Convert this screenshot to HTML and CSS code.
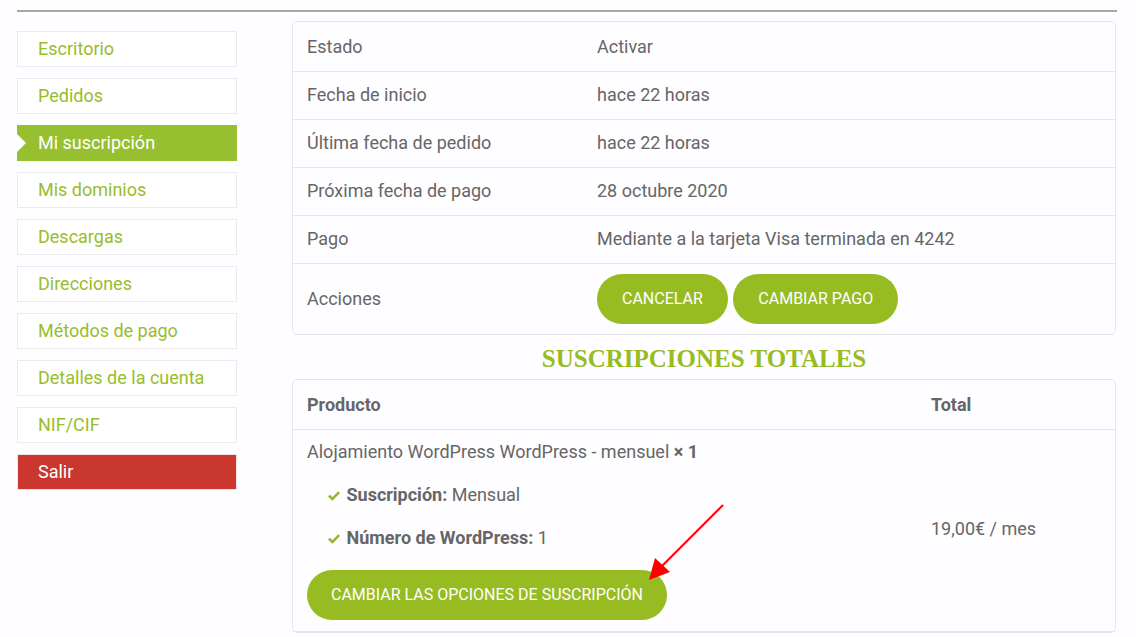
FILE: index.html
```html
<!DOCTYPE html>
<html lang="es">

<head>
    <meta charset="UTF-8">
    <title>Mi suscripción</title>
    <link rel="stylesheet" href="styles.css">
</head>

<body>
    <div class="page">
        <div class="topline"></div>
        <div class="layout">
            <ul class="menu">
                <li><a href="#">Escritorio</a></li>
                <li><a href="#">Pedidos</a></li>
                <li class="active"><a href="#">Mi suscripción</a></li>
                <li><a href="#">Mis dominios</a></li>
                <li><a href="#">Descargas</a></li>
                <li><a href="#">Direcciones</a></li>
                <li><a href="#">Métodos de pago</a></li>
                <li><a href="#">Detalles de la cuenta</a></li>
                <li><a href="#">NIF/CIF</a></li>
                <li class="logout"><a href="#">Salir</a></li>
            </ul>

            <div class="content">
                <table class="details">
                    <tbody>
                        <tr>
                            <td class="label">Estado</td>
                            <td>Activar</td>
                        </tr>
                        <tr>
                            <td class="label">Fecha de inicio</td>
                            <td>hace 22 horas</td>
                        </tr>
                        <tr>
                            <td class="label">Última fecha de pedido</td>
                            <td>hace 22 horas</td>
                        </tr>
                        <tr>
                            <td class="label">Próxima fecha de pago</td>
                            <td>28 octubre 2020</td>
                        </tr>
                        <tr>
                            <td class="label">Pago</td>
                            <td>Mediante a la tarjeta Visa terminada en 4242</td>
                        </tr>
                        <tr class="actions">
                            <td class="label">Acciones</td>
                            <td>
                                <a class="btn" href="#">Cancelar</a>
                                <a class="btn" href="#">Cambiar pago</a>
                            </td>
                        </tr>
                    </tbody>
                </table>

                <h2 class="totals-title">SUSCRIPCIONES TOTALES</h2>

                <table class="totals">
                    <thead>
                        <tr>
                            <th class="product">Producto</th>
                            <th>Total</th>
                        </tr>
                    </thead>
                    <tbody>
                        <tr>
                            <td class="product">
                                <div class="product-name">Alojamiento WordPress WordPress - mensuel <strong>× 1</strong></div>
                                <ul class="meta">
                                    <li>
                                        <svg class="check" viewBox="0 0 14 12" width="14" height="12"><path d="M1 6.5 L2.8 4.7 L5.4 7.2 L11.2 1.2 L13 3 L5.4 10.8 Z" fill="#8fb92a"/></svg>
                                        <strong>Suscripción:</strong> Mensual
                                    </li>
                                    <li>
                                        <svg class="check" viewBox="0 0 14 12" width="14" height="12"><path d="M1 6.5 L2.8 4.7 L5.4 7.2 L11.2 1.2 L13 3 L5.4 10.8 Z" fill="#8fb92a"/></svg>
                                        <strong>Número de WordPress:</strong> 1
                                    </li>
                                </ul>
                                <a class="btn wide" href="#">Cambiar las opciones de suscripción</a>
                            </td>
                            <td class="price">19,00€ / mes</td>
                        </tr>
                    </tbody>
                </table>
            </div>
        </div>
    </div>

    <svg class="arrow" width="1136" height="637" viewBox="0 0 1136 637">
        <line x1="723" y1="505" x2="660" y2="568" stroke="#f00" stroke-width="2"/>
        <polygon points="649,580 655,558 670,572" fill="#f00"/>
    </svg>
</body>

</html>
```

FILE: styles.css
```css
body {
    margin: 0;
    font-family: Roboto, "Liberation Sans", sans-serif;
    font-size: 18px;
    color: #666;
    background-color: #fefdff;
}

.page {
    padding: 10px 19px 0 17px;
}

.topline {
    border-top: 2px solid #a8a8a8;
}

.layout {
    display: grid;
    grid-template-columns: 220px 824px;
    column-gap: 55px;
    margin-top: 9px;
}

/* menu */

ul.menu {
    margin: 10px 0 0 0;
    padding: 0;
    list-style: none;
}

ul.menu li {
    position: relative;
    margin-bottom: 11px;
    border: 1px solid #ebeaf0;
    background-color: #fff;
}

ul.menu li a {
    display: block;
    height: 34px;
    line-height: 34px;
    padding-left: 20px;
    color: #98bd2b;
    text-decoration: none;
}

ul.menu li.active {
    border-color: #97c030;
    background-color: #97c030;
}

ul.menu li.active a {
    color: #fff;
}

ul.menu li.active::before {
    content: '';
    position: absolute;
    left: -1px;
    top: 8px;
    border-top: 9px solid transparent;
    border-bottom: 9px solid transparent;
    border-left: 9px solid #fff;
}

ul.menu li.logout {
    border-color: #f4e4e2;
    background-color: #c9372f;
}

ul.menu li.logout a {
    color: #fff;
}

/* tables */

table.details,
table.totals {
    width: 100%;
    border-collapse: separate;
    border-spacing: 0;
    border: 1px solid #e6e5ea;
    border-radius: 5px;
    background-color: #fefdff;
}

table.details td {
    padding: 11px 15px 12px 14px;
    line-height: 24px;
    border-bottom: 1px solid #e6e5ea;
}

table.details td.label {
    width: 261px;
}

table.details tr:first-child td {
    padding-top: 13px;
}

table.details tr.actions td {
    border-bottom: none;
    padding-top: 10px;
    padding-bottom: 10px;
}

.btn {
    display: inline-block;
    height: 50px;
    line-height: 50px;
    padding: 0 25px;
    border-radius: 25px;
    font-size: 16px;
    text-transform: uppercase;
    text-decoration: none;
    color: #fff;
    background-color: #97bc22;
}

table.details tr.actions .btn + .btn {
    margin-left: 1px;
}

table.details tr.actions td.label {
    vertical-align: middle;
}

h2.totals-title {
    margin: 11px 0 7px 0;
    line-height: 26px;
    font-family: "Liberation Serif", serif;
    font-size: 25px;
    font-weight: bold;
    text-align: center;
    color: #97bc22;
}

table.totals th {
    height: 49px;
    padding: 0 15px 0 14px;
    text-align: left;
    font-weight: bold;
    border-bottom: 1px solid #e6e5ea;
}

table.totals th.product,
table.totals td.product {
    width: 595px;
}

table.totals td {
    padding: 10px 15px 11px 14px;
    line-height: 24px;
    border-bottom: 1px solid #e6e5ea;
}

table.totals td.price {
    vertical-align: middle;
    padding-top: 8px;
}

ul.meta {
    margin: 19px 0 0 0;
    padding: 0 0 0 20px;
    list-style: none;
}

ul.meta li {
    margin-bottom: 19px;
}

ul.meta .check {
    margin-right: 1px;
    vertical-align: -1px;
}

.btn.wide {
    margin-top: 1px;
    padding: 0 24px;
}

.arrow {
    position: absolute;
    left: 0;
    top: 0;
    pointer-events: none;
}
```
